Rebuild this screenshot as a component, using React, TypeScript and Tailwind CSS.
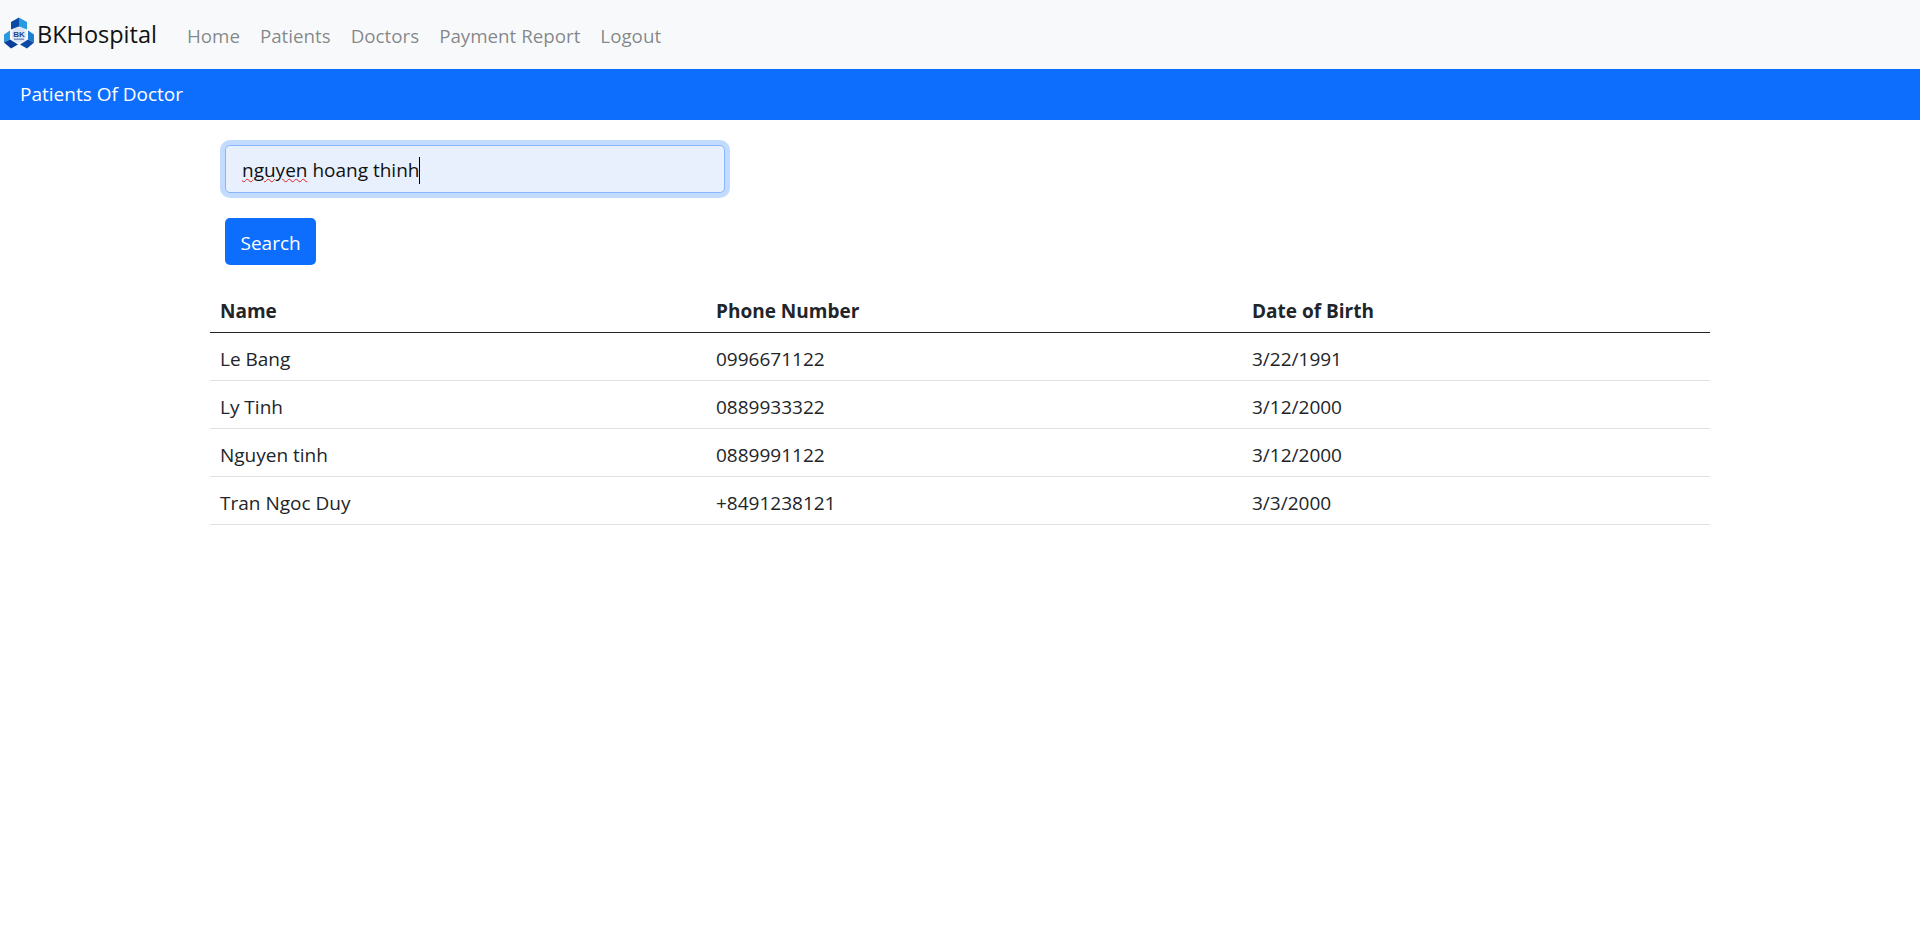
const patients = [
  { name: "Le Bang", phone: "0996671122", dob: "3/22/1991" },
  { name: "Ly Tinh", phone: "0889933322", dob: "3/12/2000" },
  { name: "Nguyen tinh", phone: "0889991122", dob: "3/12/2000" },
  { name: "Tran Ngoc Duy", phone: "+8491238121", dob: "3/3/2000" },
];

const navLinks = ["Home", "Patients", "Doctors", "Payment Report", "Logout"];

function Logo() {
  return (
    <svg width="30" height="33" viewBox="0 0 30 32" className="mb-[3px] shrink-0">
      {/* top arm */}
      <path d="M15 0L7 4.500V12L15 9z" fill="#0a4aa5" />
      <path d="M15 0L23 4.500V12L15 9z" fill="#2a9ae0" />
      {/* left arm */}
      <path d="M6 13L0 17V25L6 22z" fill="#2a9ae0" />
      <path d="M0 25L7 31L14 27L6 22z" fill="#0a3f9c" />
      {/* right arm */}
      <path d="M24 13L30 17V25L24 22z" fill="#1c7fd2" />
      <path d="M30 25L23 31L16 27L24 22z" fill="#0a4aa5" />
      {/* center badge */}
      <rect x="8" y="10" width="14" height="15" rx="6" fill="#dde6f2" />
      <text x="15" y="19" textAnchor="middle" fontSize="8" fontWeight="700" fontFamily="Liberation Sans" fill="#1c4596">
        BK
      </text>
      <rect x="10" y="21" width="10" height="1.500" fill="#7f98c4" />
    </svg>
  );
}

export default function App() {
  return (
    <div className="min-h-screen bg-white text-[19px] leading-[27px] text-[#212529] font-['Open_Sans','Liberation_Sans',sans-serif]">
      {/* Navbar */}
      <nav className="flex h-[69px] items-center bg-[#f8f9fa] pl-1">
        <a className="flex items-center gap-[3px] text-[23.5px] text-[#111]">
          <Logo />
          BKHospital
        </a>
        <div className="ml-[30px] flex gap-5 pt-[1px] text-[18.75px] text-[#212529]/55">
          {navLinks.map((link) => (
            <a key={link}>{link}</a>
          ))}
        </div>
      </nav>

      {/* Title bar */}
      <div className="flex h-[51px] items-center bg-[#0d6efd] px-5 text-white">Patients Of Doctor</div>

      <div className="mx-auto w-[1500px] pt-[25px]">
        {/* Search form */}
        <div className="pl-[15px]">
          <div className="flex h-[48px] w-[500px] items-center rounded-[5px] border border-[#86b7fe] bg-[#e8f0fe] px-4 pt-[3px] text-[#111] shadow-[0_0_0_5px_#c2dbfe]">
            <span className="underline decoration-wavy decoration-[#e02020] decoration-1">nguyen</span>
            <span>&nbsp;hoang thinh</span>
            <span className="h-[27px] w-px bg-black" />
          </div>
          <button className="mt-[25px] h-[47px] rounded-[5px] bg-[#0d6efd] px-[15.500px] pt-[3px] text-white">Search</button>
        </div>

        {/* Table */}
        <table className="mt-[23px] w-full border-separate border-spacing-0 text-left">
          <thead>
            <tr>
              <th className="h-[45px] w-[496px] border-b border-[#212529] px-[10px] pt-[2px] font-bold">Name</th>
              <th className="h-[45px] w-[536px] border-b border-[#212529] px-[10px] pt-[2px] font-bold">Phone Number</th>
              <th className="h-[45px] border-b border-[#212529] px-[10px] pt-[2px] font-bold">Date of Birth</th>
            </tr>
          </thead>
          <tbody>
            {patients.map((p) => (
              <tr key={p.name}>
                <td className="h-[48px] border-b border-[#dee2e6] px-[10px] pt-[5px]">{p.name}</td>
                <td className="h-[48px] border-b border-[#dee2e6] px-[10px] pt-[5px]">{p.phone}</td>
                <td className="h-[48px] border-b border-[#dee2e6] px-[10px] pt-[5px]">{p.dob}</td>
              </tr>
            ))}
          </tbody>
        </table>
      </div>
    </div>
  );
}
